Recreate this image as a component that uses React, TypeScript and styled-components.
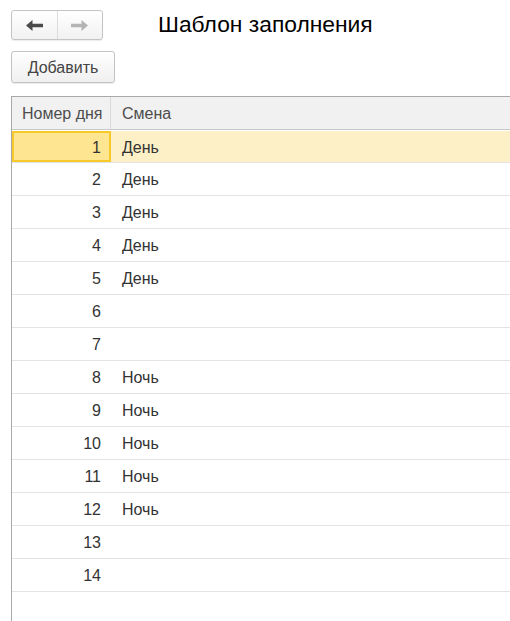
import styled, { createGlobalStyle } from "styled-components";

const GlobalStyle = createGlobalStyle`
  html, body {
    margin: 0;
    padding: 0;
    background: #ffffff;
    overflow: hidden;
  }
  body {
    font-family: "Liberation Sans", Arial, sans-serif;
    color: #333333;
  }
`;

type Row = { num: number; shift: string };

const rows: Row[] = [
  { num: 1, shift: "День" },
  { num: 2, shift: "День" },
  { num: 3, shift: "День" },
  { num: 4, shift: "День" },
  { num: 5, shift: "День" },
  { num: 6, shift: "" },
  { num: 7, shift: "" },
  { num: 8, shift: "Ночь" },
  { num: 9, shift: "Ночь" },
  { num: 10, shift: "Ночь" },
  { num: 11, shift: "Ночь" },
  { num: 12, shift: "Ночь" },
  { num: 13, shift: "" },
  { num: 14, shift: "" },
];

const Arrow = ({ dir, color }: { dir: "left" | "right"; color: string }) => (
  <svg
    width="17"
    height="11"
    viewBox="0 0 17 11"
    style={{ transform: dir === "right" ? "scaleX(-1)" : undefined }}
  >
    <path d="M0 5.5 L6.5 0 L6.5 3.8 L17 3.8 L17 7.2 L6.5 7.2 L6.5 11 Z" fill={color} />
  </svg>
);

const App = () => {
  const current = 1;
  return (
    <Page>
      <GlobalStyle />
      <TopBar>
        <NavGroup>
          <NavButton>
            <Arrow dir="left" color="#4a4a4a" />
          </NavButton>
          <NavButton $divider>
            <Arrow dir="right" color="#b4b4b4" />
          </NavButton>
        </NavGroup>
        <Title>Шаблон заполнения</Title>
      </TopBar>
      <CommandBar>
        <Button>Добавить</Button>
      </CommandBar>
      <Table>
        <HeaderRow>
          <HeadCell $width={99}>Номер дня</HeadCell>
          <HeadCell>Смена</HeadCell>
        </HeaderRow>
        {rows.map((r) => (
          <BodyRow key={r.num} $selected={r.num === current}>
            <NumCell $current={r.num === current}>{r.num}</NumCell>
            <TextCell>{r.shift}</TextCell>
          </BodyRow>
        ))}
      </Table>
    </Page>
  );
};

export default App;

const Page = styled.div`
  width: 510px;
  height: 621px;
  display: flex;
  flex-direction: column;
`;

const TopBar = styled.div`
  display: flex;
  align-items: center;
  padding: 10px 0 0 11px;
  height: 30px;
`;

const NavGroup = styled.div`
  display: flex;
  width: 92px;
  height: 30px;
  box-sizing: border-box;
  border: 1px solid #c4c4c4;
  border-radius: 3px;
  background: linear-gradient(#ffffff, #f1f1f1);
  box-shadow: 0 1px 1px rgba(0, 0, 0, 0.08);
  overflow: hidden;
`;

const NavButton = styled.div<{ $divider?: boolean }>`
  flex: 1;
  display: flex;
  align-items: center;
  justify-content: center;
  border-left: ${(p) => (p.$divider ? "1px solid #dcdcdc" : "none")};
`;

const Title = styled.div`
  margin-left: 55px;
  font-size: 22.8px;
  color: #000000;
  margin-top: -1px;
`;

const CommandBar = styled.div`
  display: flex;
  padding: 11px 0 0 11px;
`;

const Button = styled.div`
  width: 104px;
  height: 32px;
  box-sizing: border-box;
  border: 1px solid #c4c4c4;
  border-radius: 3px;
  background: linear-gradient(#ffffff, #f0f0f0);
  box-shadow: 0 1px 1px rgba(0, 0, 0, 0.08);
  display: flex;
  align-items: center;
  justify-content: center;
  padding-top: 1px;
  font-size: 16px;
  color: #444444;
`;

const Table = styled.div`
  margin: 13px 0 0 11px;
  flex: 1;
  width: 520px;
  border-left: 1px solid #a8a8a8;
  border-top: 1px solid #a8a8a8;
`;

const HeaderRow = styled.div`
  display: flex;
  height: 33px;
  box-sizing: border-box;
  background: #f1f1f1;
  border-bottom: 1px solid #c8c8c8;
`;

const HeadCell = styled.div<{ $width?: number }>`
  width: ${(p) => (p.$width ? `${p.$width}px` : "auto")};
  flex: ${(p) => (p.$width ? "none" : "1")};
  box-sizing: border-box;
  padding: 1px 0 0 ${(p) => (p.$width ? "10px" : "11px")};
  display: flex;
  align-items: center;
  white-space: nowrap;
  overflow: hidden;
  font-size: 16px;
  color: #4d4d4d;
  border-right: ${(p) => (p.$width ? "1px solid #dadada" : "none")};
`;

const BodyRow = styled.div<{ $selected?: boolean }>`
  display: flex;
  height: 33px;
  box-sizing: border-box;
  border-bottom: 1px solid #e3e3e3;
  border-top: ${(p) => (p.$selected ? "1px solid #ffffff" : "none")};
  background: ${(p) => (p.$selected ? "#fef0c6" : "#ffffff")};
`;

const NumCell = styled.div<{ $current?: boolean }>`
  width: 99px;
  box-sizing: border-box;
  display: flex;
  align-items: center;
  justify-content: flex-end;
  font-size: 16px;
  color: #333333;
  background: ${(p) => (p.$current ? "#fde592" : "transparent")};
  border: ${(p) => (p.$current ? "2px solid #f8c92a" : "none")};
  padding: 2px ${(p) => (p.$current ? "8px" : "10px")} 0 10px;
`;

const TextCell = styled.div`
  flex: 1;
  padding: 2px 11px 0;
  display: flex;
  align-items: center;
  font-size: 16px;
  color: #333333;
`;
